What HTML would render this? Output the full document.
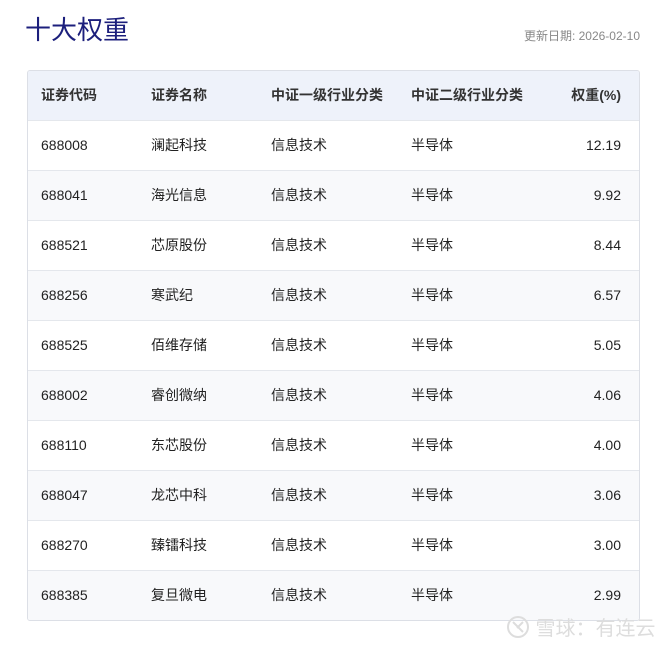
<!DOCTYPE html>
<html><head><meta charset="utf-8"><style>
body{margin:0;background:#fff;font-family:"Liberation Sans","Noto Sans CJK SC",sans-serif;width:672px;height:649px;position:relative;overflow:hidden}
.t{position:absolute;left:25px;top:12px;font-size:26px;color:#1c1f7c;line-height:36px}
.d{position:absolute;right:32px;top:28px;font-size:12px;color:#888;line-height:16px}
.tb{position:absolute;left:27px;top:70px;width:611px;border:1px solid #dcdfe6;border-radius:3px;overflow:hidden}
.r{height:49px;border-bottom:1px solid #e4e7ec;position:relative;font-size:14px;color:#222;line-height:49px}
.r:last-child{border-bottom:none;height:49px}
.h{background:#eef2fa;font-weight:bold;color:#333}
.r:nth-child(odd):not(.h){background:#f8f9fb}
.r span{position:absolute;top:0}
.c1{left:13px}.c2{left:123px}.c3{left:243px}.c4{left:383px}.c5{right:18px}
.w{position:absolute;left:506px;top:614px;font-size:20px;color:#ddd;line-height:30px}
</style></head><body>
<div class="t">十大权重</div>
<div class="d">更新日期: 2026-02-10</div>
<div class="tb">
<div class="r h"><span class="c1">证券代码</span><span class="c2">证券名称</span><span class="c3">中证一级行业分类</span><span class="c4">中证二级行业分类</span><span class="c5">权重(%)</span></div>
<div class="r"><span class="c1">688008</span><span class="c2">澜起科技</span><span class="c3">信息技术</span><span class="c4">半导体</span><span class="c5">12.19</span></div>
<div class="r"><span class="c1">688041</span><span class="c2">海光信息</span><span class="c3">信息技术</span><span class="c4">半导体</span><span class="c5">9.92</span></div>
<div class="r"><span class="c1">688521</span><span class="c2">芯原股份</span><span class="c3">信息技术</span><span class="c4">半导体</span><span class="c5">8.44</span></div>
<div class="r"><span class="c1">688256</span><span class="c2">寒武纪</span><span class="c3">信息技术</span><span class="c4">半导体</span><span class="c5">6.57</span></div>
<div class="r"><span class="c1">688525</span><span class="c2">佰维存储</span><span class="c3">信息技术</span><span class="c4">半导体</span><span class="c5">5.05</span></div>
<div class="r"><span class="c1">688002</span><span class="c2">睿创微纳</span><span class="c3">信息技术</span><span class="c4">半导体</span><span class="c5">4.06</span></div>
<div class="r"><span class="c1">688110</span><span class="c2">东芯股份</span><span class="c3">信息技术</span><span class="c4">半导体</span><span class="c5">4.00</span></div>
<div class="r"><span class="c1">688047</span><span class="c2">龙芯中科</span><span class="c3">信息技术</span><span class="c4">半导体</span><span class="c5">3.06</span></div>
<div class="r"><span class="c1">688270</span><span class="c2">臻镭科技</span><span class="c3">信息技术</span><span class="c4">半导体</span><span class="c5">3.00</span></div>
<div class="r"><span class="c1">688385</span><span class="c2">复旦微电</span><span class="c3">信息技术</span><span class="c4">半导体</span><span class="c5">2.99</span></div>
</div>
<div class="w"><svg width="24" height="24" viewBox="0 0 24 24" style="vertical-align:-4px"><circle cx="12" cy="12" r="10" fill="none" stroke="#ddd" stroke-width="2"/><path d="M7 7l10 10M17 7l-6 6" stroke="#ddd" stroke-width="2" fill="none"/></svg> 雪球：有连云</div>
</body></html>
